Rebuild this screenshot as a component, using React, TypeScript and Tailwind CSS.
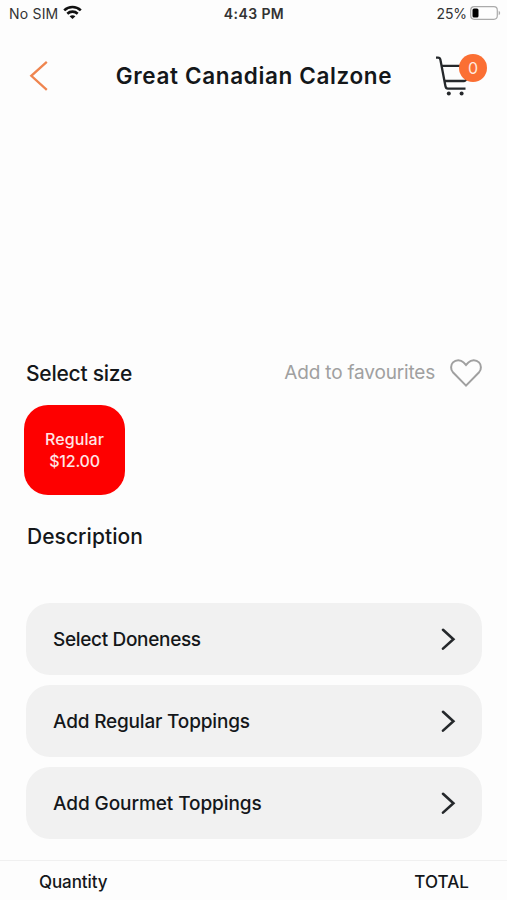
import type { ReactNode } from "react";

const options = [
  { label: "Select Doneness", className: "tracking-[-0.33px]" },
  { label: "Add Regular Toppings", className: "tracking-[-0.18px]" },
  { label: "Add Gourmet Toppings", className: "tracking-[-0.08px]" },
];

const StatusBar = () => (
  <div className="h-7 pl-[9px] pr-[6px] grid grid-cols-3 items-center text-[14px] leading-none text-[#333]">
    <div className="flex items-center gap-[5px]">
      <span className="tracking-[0.2px]">No SIM</span>
      <svg className="-mt-[3px]" width="19" height="15" viewBox="0 0 19 15" fill="none" stroke="#111" strokeWidth="2.6">
        <path d="M1.2 5.4C5.9 .9 13.1 .9 17.8 5.4" />
        <path d="M4.3 8.7c3-2.8 7.4-2.8 10.4 0" />
        <path d="M6.6 11.3c1.7-1.5 4.1-1.5 5.8 0L9.5 14Z" fill="#111" stroke="none" />
      </svg>
    </div>
    <span className="-ml-[2px] text-center font-semibold tracking-[0.4px]">4:43 PM</span>
    <div className="flex items-center justify-end gap-[3px]">
      <span className="tracking-[-0.1px]">25%</span>
      <svg className="-mt-[2px]" width="31" height="14" viewBox="0 0 31 14" fill="none">
        <rect x=".7" y=".7" width="26.6" height="12.6" rx="3.5" stroke="#aaa" strokeWidth="1.2" />
        <rect x="2.5" y="2.5" width="6" height="9" rx="1.5" fill="#000" />
        <path d="M28.7 4.8c2 .8 2 3.6 0 4.4Z" fill="#aaa" />
      </svg>
    </div>
  </div>
);

const CartButton = () => (
  <button type="button" className="relative w-[52px] h-11" aria-label="Cart">
    <svg width="52" height="44" viewBox="0 0 52 44" fill="none" stroke="#25282b" strokeWidth="2.3">
      <path d="M0 3.6h2q2 0 2.4 2.1L9.4 32q.5 2.6 2.4 2.6H29.5" />
      <path d="M5.8 11.8h22M8.8 27h19q2 0 2.6-2" />
      <circle cx="12.8" cy="39.4" r="2" fill="#25282b" stroke="none" />
      <circle cx="25.6" cy="39.4" r="2" fill="#25282b" stroke="none" />
    </svg>
    <span className="absolute left-[23px] top-0 w-7 h-7 rounded-full bg-[#fb6f33] text-[#ffe9df] text-[16px] flex items-center justify-center">
      0
    </span>
  </button>
);

const Heading = ({ children }: { children: ReactNode }) => (
  <h2 className="text-[21px] leading-7 font-medium">{children}</h2>
);

const App = () => {
  return (
    <main className="w-full h-[900px] overflow-hidden flex flex-col bg-[#fdfdfd] text-[#14171a] font-['Inter',sans-serif]">
      <StatusBar />
      <header className="h-24 pl-[29px] pr-[19px] flex items-center justify-between">
        <button type="button" className="w-[43px]" aria-label="Back">
          <svg width="20" height="32" viewBox="0 0 20 32" fill="none" stroke="#ef854f" strokeWidth="2.3">
            <path d="M17.8 1.8 2.3 15.8 17.8 29.8" />
          </svg>
        </button>
        <h1 className="text-[22.5px] font-semibold whitespace-nowrap tracking-[0.64px]">
          Great Canadian Calzone
        </h1>
        <CartButton />
      </header>

      <section className="mt-[233px] pl-[26px] pr-[25px] flex items-center justify-between h-8">
        <div className="pt-[2px]">
          <Heading>
            <span className="tracking-[-0.25px]">Select size</span>
          </Heading>
        </div>
        <button type="button" className="flex items-center gap-[15px] text-[#a0a0a0]">
          <span className="text-[19px] tracking-[-0.18px]">Add to favourites</span>
          <svg width="32" height="30" viewBox="0 0 32 30" fill="none" stroke="#a0a0a0" strokeWidth="2">
            <path d="M16 27.6 2.9 14.2C.4 11.4.6 6.9 3 4.4c2.9-3 7.7-2.9 10.5 0L16 7l2.5-2.6c2.8-2.9 7.6-3 10.5 0 2.4 2.5 2.6 7 .1 9.8Z" />
          </svg>
        </button>
      </section>

      <button
        type="button"
        className="mt-4 ml-6 w-[101px] h-[90px] rounded-[24px] bg-[#fe0000] text-[#ffe5e5] text-[16px] leading-[22px] font-medium flex flex-col items-center justify-center"
      >
        <span className="tracking-[0.1px]">Regular</span>
        <span className="tracking-[-0.2px]">$12.00</span>
      </button>

      <section className="mt-7 pl-[27px]">
        <Heading>
          <span className="tracking-[0.05px]">Description</span>
        </Heading>
      </section>

      <section className="mt-[52px] pl-[26px] pr-[25px] flex flex-col gap-[10px]">
        {options.map(({ label, className }) => (
          <button
            key={label}
            type="button"
            className="h-[72px] pl-[27px] pr-[26px] rounded-[24px] bg-[#f1f1f1] flex items-center justify-between"
          >
            <span className={`pt-[3px] text-[19px] font-medium ${className}`}>{label}</span>
            <svg width="15" height="22" viewBox="0 0 15 22" fill="none" stroke="#25282b" strokeWidth="2.6" strokeLinecap="round">
              <path d="M2 1.8 12.4 11.2 2 20.6" />
            </svg>
          </button>
        ))}
      </section>

      <footer className="mt-[21px] flex-1 border-t border-[#f0f0f0] pt-[5px] pl-[39px] pr-[38px] flex items-center justify-between text-[17px] font-medium">
        <span className="tracking-[-0.1px]">Quantity</span>
        <span className="tracking-[0.05px]">TOTAL</span>
      </footer>
    </main>
  );
};

export default App;
